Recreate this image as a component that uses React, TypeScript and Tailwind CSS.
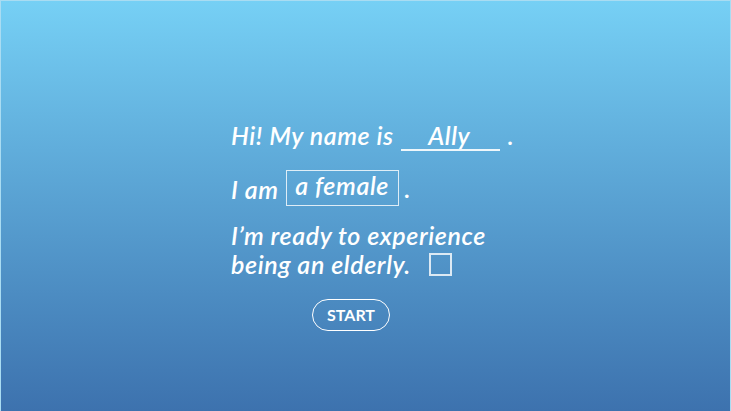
import React from "react";

export default function App() {
  return (
    <div
      className="w-[731px] h-[411px] bg-gradient-to-b from-[#76d0f5] to-[#3d72ae] border-l border-r border-t border-[#a9dcf2] text-white"
      style={{ fontFamily: "Lato, sans-serif" }}
    >
      <div className="flex flex-col pl-[230px] pt-[118px] italic font-semibold text-[25px] tracking-[0.6px]">
        <div className="flex items-end h-[32px] leading-[32px]">
          <span>Hi! My name is</span>
          <span className="ml-[7px] w-[99px] border-b-2 border-white/90 text-center leading-[28px] pr-[2px]">Ally</span>
          <span className="ml-[8px]">.</span>
        </div>
        <div className="flex items-center mt-[19px] h-[36px]">
          <span className="mt-[4px]">I am</span>
          <span className="ml-[7px] w-[113px] h-[36px] border border-white/80 flex items-center justify-center leading-none pb-[5px]">a female</span>
          <span className="ml-[6px] mt-[2px]">.</span>
        </div>
        <div className="mt-[15px] leading-[29px]">
          <div>I’m ready to experience</div>
          <div className="flex items-center">
            <span>being an elderly.</span>
            <span className="ml-[18px] mt-[-1px] w-[23px] h-[23px] border-2 border-white/80 inline-block"></span>
          </div>
        </div>
        <div className="mt-[20px] ml-[81px]">
          <button
            className="w-[78px] h-[32px] rounded-full border-[1.5px] border-white not-italic font-bold text-[16px] tracking-normal flex items-center justify-center"
          >
            START
          </button>
        </div>
      </div>
    </div>
  );
}
